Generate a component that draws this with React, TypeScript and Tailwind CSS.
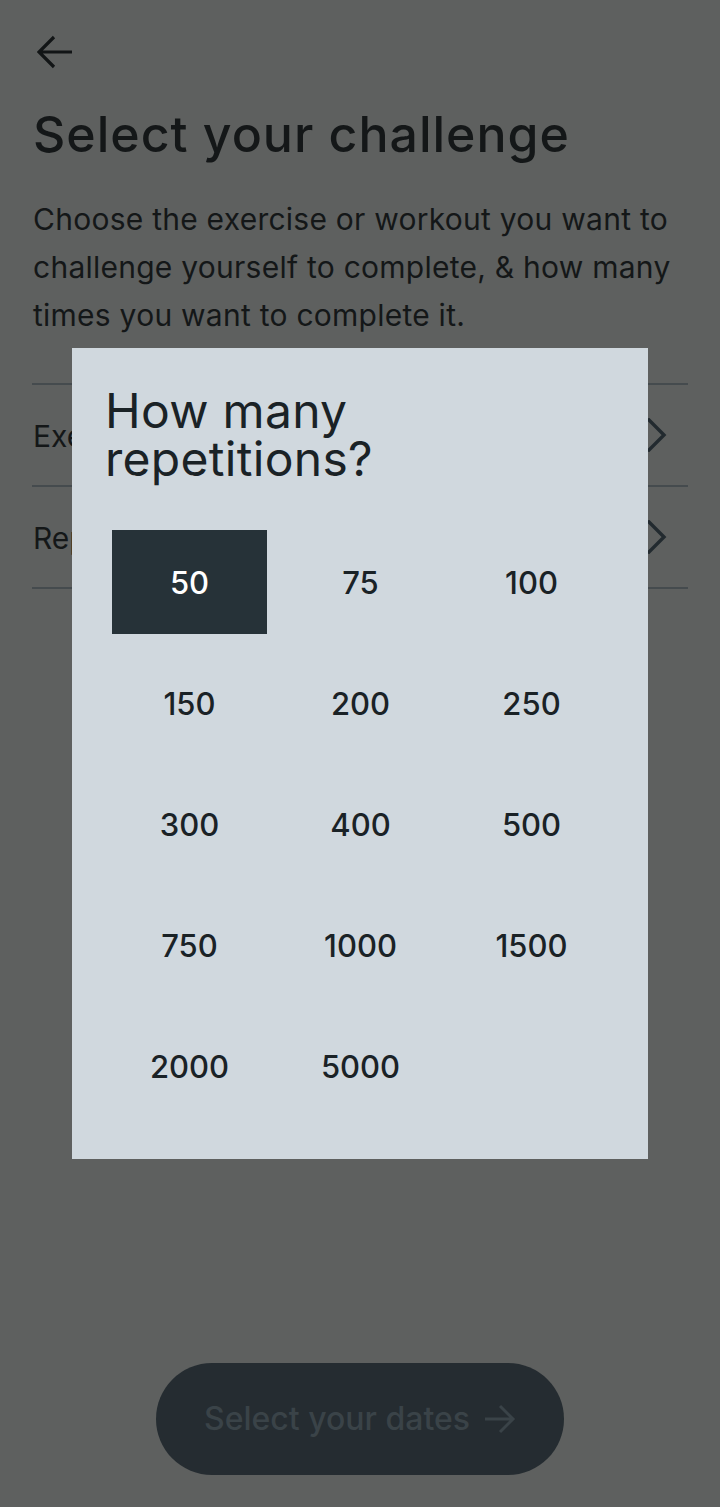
import React from "react";

const values = [50, 75, 100, 150, 200, 250, 300, 400, 500, 750, 1000, 1500, 2000, 5000];

function Chevron() {
  return (
    <svg width="22" height="34" viewBox="0 0 22 34" fill="none" className="shrink-0">
      <path d="M3 2 L18 17 L3 32" stroke="#222a2f" strokeWidth="3.4" strokeLinecap="square" strokeLinejoin="miter" />
    </svg>
  );
}

export default function App() {
  const font = { fontFamily: "Inter, 'Noto Sans', sans-serif" };
  return (
    <div className="relative min-h-[1507px] w-[720px] bg-[#5e605f] flex flex-col" style={font}>
      <div className="px-[32px] flex flex-col">
        <div className="pt-[35px] pl-[5px]">
          <svg width="36" height="34" viewBox="0 0 36 34" fill="none">
            <path d="M35 17 H3 M17 2 L2 17 L17 32" stroke="#121516" strokeWidth="3.2" />
          </svg>
        </div>
        <h1 className="mt-[36px] text-[50px] leading-[58px] font-medium text-[#141718] tracking-[1px] pl-[1px]">
          Select your challenge
        </h1>
        <p className="mt-[32px] text-[30px] leading-[48px] text-[#141718] tracking-[0.25px] pl-[1px]">
          Choose the exercise or workout you want to challenge yourself to complete, &amp; how many times you want to complete it.
        </p>
        <div className="mt-[44px] border-t-2 border-[#454b4e]">
          <div className="h-[102px] border-b-2 border-[#454b4e] flex items-center justify-between pl-[1px] pr-[20px]">
            <span className="text-[30px] text-[#141718] pt-[2px]">Exercise</span>
            <Chevron />
          </div>
          <div className="h-[102px] border-b-2 border-[#454b4e] flex items-center justify-between pl-[1px] pr-[20px]">
            <span className="text-[30px] text-[#141718] pt-[2px]">Repetitions</span>
            <Chevron />
          </div>
        </div>
      </div>

      <div className="mt-auto pb-[32px] flex justify-center">
        <div className="w-[408px] h-[112px] rounded-full bg-[#252c31] flex items-center justify-center gap-[14px]">
          <span className="text-[32px] font-medium text-[#3a4348]">Select your dates</span>
          <svg width="32" height="30" viewBox="0 0 32 30" fill="none">
            <path d="M1 15 H29 M16 2 L29 15 L16 28" stroke="#3a4348" strokeWidth="3" />
          </svg>
        </div>
      </div>

      <div className="absolute top-[348px] left-[72px] w-[576px] h-[811px] bg-[#d0d8de] pt-[39px] px-[40px]">
        <h2 className="-ml-[7px] text-[48px] leading-[48px] font-normal tracking-[0.3px] text-[#1a2226]">
          How many<br />repetitions?
        </h2>
        <div className="mt-[47px] grid grid-cols-[155px_155px_155px] auto-rows-[104px] gap-x-[16px] gap-y-[17px]">
          {values.map((v, i) => (
            <div
              key={v}
              className={
                i === 0
                  ? "flex items-center justify-center bg-[#263238] text-white text-[31px] font-medium pt-[2px]"
                  : "flex items-center justify-center text-[#1a2226] text-[31px] font-medium pt-[2px]"
              }
            >
              {v}
            </div>
          ))}
        </div>
      </div>
    </div>
  );
}
